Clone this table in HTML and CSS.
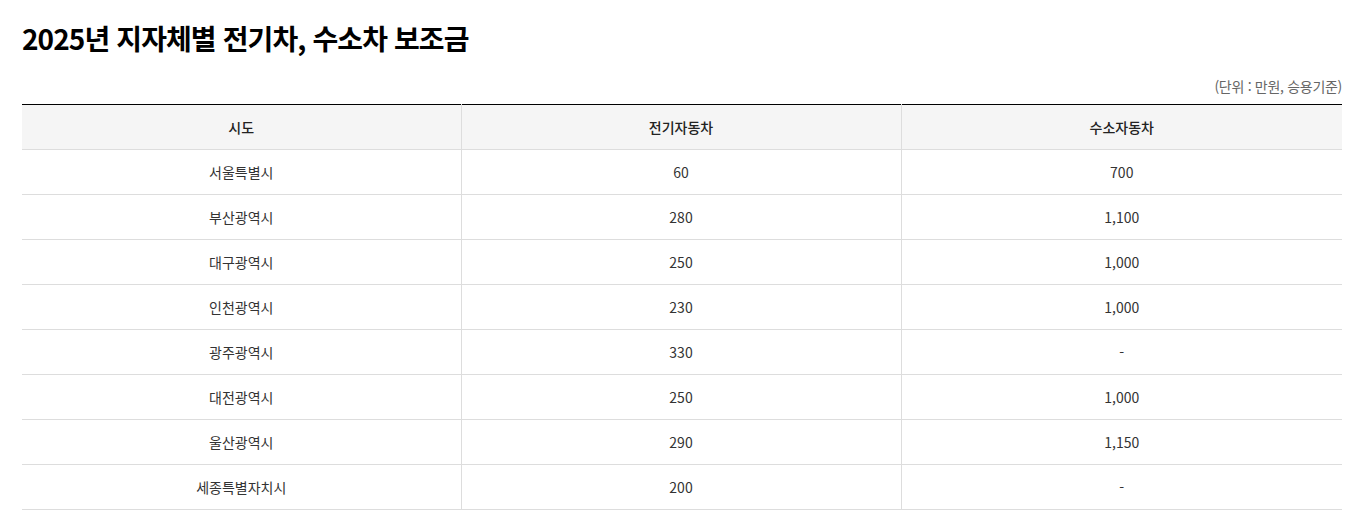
FILE: index.html
```html
<!DOCTYPE html>
<html lang="ko">
<head>
<meta charset="utf-8">
<link rel="stylesheet" href="styles.css">
</head>
<body>
<div class="wrap">
  <h2 class="title">2025년 지자체별 전기차, 수소차 보조금</h2>
  <p class="unit">(단위 : 만원, 승용기준)</p>
  <table class="tbl">
    <colgroup><col class="c1"><col class="c2"><col class="c3"></colgroup>
    <thead>
      <tr><th>시도</th><th>전기자동차</th><th>수소자동차</th></tr>
    </thead>
    <tbody>
      <tr><td>서울특별시</td><td>60</td><td>700</td></tr>
      <tr><td>부산광역시</td><td>280</td><td>1,100</td></tr>
      <tr><td>대구광역시</td><td>250</td><td>1,000</td></tr>
      <tr><td>인천광역시</td><td>230</td><td>1,000</td></tr>
      <tr><td>광주광역시</td><td>330</td><td>-</td></tr>
      <tr><td>대전광역시</td><td>250</td><td>1,000</td></tr>
      <tr><td>울산광역시</td><td>290</td><td>1,150</td></tr>
      <tr><td>세종특별자치시</td><td>200</td><td>-</td></tr>
    </tbody>
  </table>
</div>
</body>
</html>
```
FILE: styles.css
```css
* { box-sizing: border-box; }
body {
  margin: 0;
  background: #fff;
  font-family: "Noto Sans CJK KR", "Noto Sans", sans-serif;
  color: #333;
}
.wrap {
  width: 1342px;
  padding: 20px 0 0 22px;
}
.title {
  margin: 0;
  font-size: 28px;
  font-weight: 700;
  line-height: 36px;
  color: #000;
  letter-spacing: -0.9px;
}
.unit {
  margin: 20px 0 0;
  text-align: right;
  font-size: 14px;
  line-height: 20px;
  color: #666;
  letter-spacing: -0.3px;
}
.tbl {
  margin-top: 8px;
  width: 1320px;
  border-collapse: collapse;
  table-layout: fixed;
  border-top: 1px solid #000;
}
.c1 { width: 439px; }
.c2 { width: 440px; }
.c3 { width: 441px; }
.tbl th, .tbl td {
  height: 45px;
  padding: 0;
  text-align: center;
  vertical-align: middle;
  font-size: 14px;
  border-bottom: 1px solid #ddd;
  border-left: 1px solid #ddd;
}
.tbl th:first-child, .tbl td:first-child { border-left: none; }
.tbl th {
  background: #f5f5f5;
  font-weight: 500;
  color: #222;
}
.tbl td { color: #333; }
```
